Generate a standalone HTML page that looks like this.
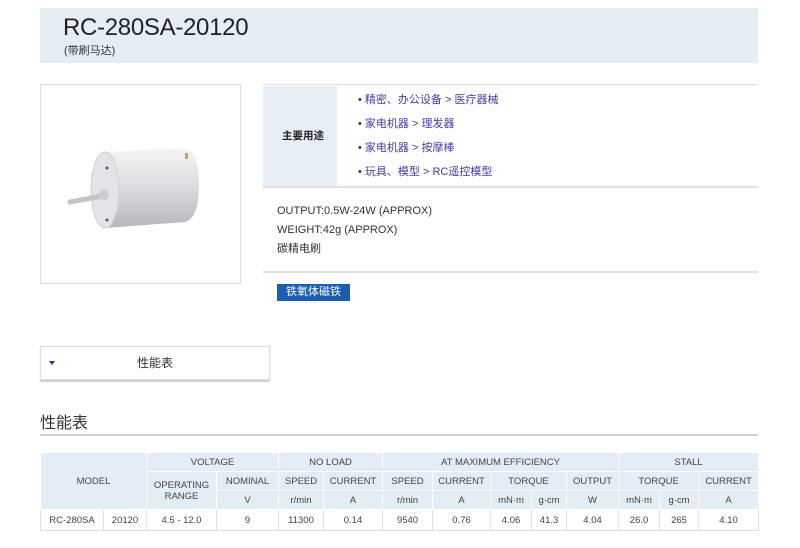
<!DOCTYPE html>
<html><head><meta charset="utf-8"><style>
*{margin:0;padding:0;box-sizing:border-box}
body{width:800px;height:548px;background:#fff;font-family:"Liberation Sans","Noto Sans CJK SC",sans-serif;color:#333;position:relative;overflow:hidden}
.a{position:absolute}
.blue{color:#4a3aa0}
table{border-collapse:collapse;position:absolute;left:40px;top:452px;width:718px;font-size:9.5px;color:#444;table-layout:fixed}
td{text-align:center;border:1px solid #fff;background:#e4ecf5;height:19px;padding:0}
tr.d td{background:#fff;border:1px solid #ddd;border-top:none;height:21px}
</style></head><body>
<div class="a" style="left:40px;top:8px;width:718px;height:55px;background:#e5edf5"></div>
<div class="a" style="left:63px;top:14px;font-size:24px;color:#222;letter-spacing:-0.3px">RC-280SA-20120</div>
<div class="a" style="left:64px;top:42px;font-size:11px;color:#333">(带刷马达)</div>

<div class="a" style="left:40px;top:84px;width:201px;height:200px;border:1px solid #ddd"></div>
<svg class="a" style="left:60px;top:140px" width="150" height="100" viewBox="0 0 150 100">
<defs><linearGradient id="g" x1="0" y1="0" x2="0" y2="1"><stop offset="0" stop-color="#f4f4f6"/><stop offset=".45" stop-color="#dedfe2"/><stop offset="1" stop-color="#b5b7bc"/></linearGradient></defs>
<path d="M45 12 L125 8 Q139 12 139 45 Q139 78 125 82 L45 88 Z" fill="url(#g)"/>
<ellipse cx="45" cy="50" rx="14" ry="38" fill="#e3e4e7" stroke="#cfd0d3"/>
<line x1="10" y1="62" x2="42" y2="56" stroke="#c3c4c7" stroke-width="5" stroke-linecap="round"/>
<circle cx="44" cy="55" r="5" fill="#ccc"/>
<circle cx="47" cy="28" r="1.5" fill="#555"/><circle cx="47" cy="80" r="1.5" fill="#555"/>
<rect x="125" y="13" width="3" height="6" fill="#c9a060"/>
</svg>

<div class="a" style="left:263px;top:84px;width:495px;height:1px;background:#ddd"></div>
<div class="a" style="left:263px;top:86px;width:74px;height:100px;background:#e8eef6"></div>
<div class="a" style="left:282px;top:128px;font-size:10.5px;font-weight:bold;color:#222">主要用途</div>
<div class="a" style="left:358px;top:88px;font-size:11px;line-height:24px;color:#333">
<div>• <span class="blue">精密、办公设备 &gt; 医疗器械</span></div>
<div>• <span class="blue">家电机器 &gt; 理发器</span></div>
<div>• <span class="blue">家电机器 &gt; 按摩棒</span></div>
<div>• <span class="blue">玩具、模型 &gt; RC遥控模型</span></div>
</div>
<div class="a" style="left:263px;top:186px;width:495px;height:2px;background:#e2e2e2"></div>
<div class="a" style="left:277px;top:202px;font-size:11px;line-height:19px;color:#333">OUTPUT:0.5W-24W (APPROX)<br>WEIGHT:42g (APPROX)<br>碳精电刷</div>
<div class="a" style="left:263px;top:271px;width:495px;height:2px;background:#e2e2e2"></div>
<div class="a" style="left:277px;top:284px;width:73px;height:17px;background:#1a5eb0;color:#fff;font-size:11px;text-align:center;line-height:17px">铁氧体磁铁</div>

<div class="a" style="left:40px;top:346px;width:230px;height:34px;border:1px solid #ddd;box-shadow:0 2px 1px #ccc"></div>
<div class="a" style="left:49px;top:361px;width:0;height:0;border-left:3px solid transparent;border-right:3px solid transparent;border-top:4px solid #1a3f80"></div>
<div class="a" style="left:137px;top:354px;font-size:12px;color:#333">性能表</div>

<div class="a" style="left:40px;top:409px;font-size:16px;color:#333">性能表</div>
<div class="a" style="left:40px;top:434px;width:718px;height:2px;background:#d0d0d0"></div>

<table>
<colgroup><col style="width:63px"><col style="width:43px"><col style="width:70px"><col style="width:62px"><col style="width:45px"><col style="width:59px"><col style="width:50px"><col style="width:58px"><col style="width:41px"><col style="width:35px"><col style="width:52px"><col style="width:41px"><col style="width:39px"><col style="width:60px"></colgroup>
<tr><td colspan="2" rowspan="3">MODEL</td><td colspan="2">VOLTAGE</td><td colspan="2">NO LOAD</td><td colspan="5">AT MAXIMUM EFFICIENCY</td><td colspan="3">STALL</td></tr>
<tr><td rowspan="2">OPERATING<br>RANGE</td><td>NOMINAL</td><td>SPEED</td><td>CURRENT</td><td>SPEED</td><td>CURRENT</td><td colspan="2">TORQUE</td><td>OUTPUT</td><td colspan="2">TORQUE</td><td>CURRENT</td></tr>
<tr><td>V</td><td>r/min</td><td>A</td><td>r/min</td><td>A</td><td>mN·m</td><td>g·cm</td><td>W</td><td>mN·m</td><td>g·cm</td><td>A</td></tr>
<tr class="d"><td>RC-280SA</td><td>20120</td><td>4.5 - 12.0</td><td>9</td><td>11300</td><td>0.14</td><td>9540</td><td>0.76</td><td>4.06</td><td>41.3</td><td>4.04</td><td>26.0</td><td>265</td><td>4.10</td></tr>
</table>
</body></html>
